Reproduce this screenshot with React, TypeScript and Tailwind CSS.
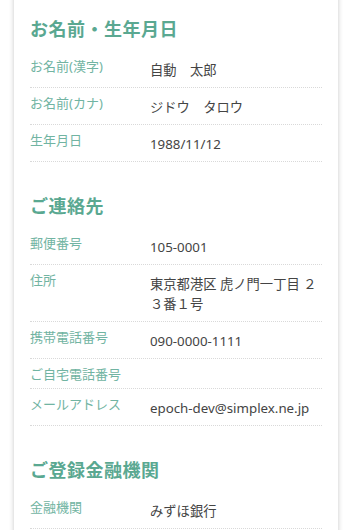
import type { ReactNode } from 'react';

type Row = { label: string; value?: ReactNode };

const sections: { title: string; rows: Row[] }[] = [
  {
    title: 'お名前・生年月日',
    rows: [
      { label: 'お名前(漢字)', value: '自動　太郎' },
      { label: 'お名前(カナ)', value: 'ジドウ　タロウ' },
      { label: '生年月日', value: '1988/11/12' },
    ],
  },
  {
    title: 'ご連絡先',
    rows: [
      { label: '郵便番号', value: '105-0001' },
      { label: '住所', value: '東京都港区 虎ノ門一丁目 ２３番１号' },
      { label: '携帯電話番号', value: '090-0000-1111' },
      { label: 'ご自宅電話番号' },
      { label: 'メールアドレス', value: 'epoch-dev@simplex.ne.jp' },
    ],
  },
  {
    title: 'ご登録金融機関',
    rows: [{ label: '金融機関', value: 'みずほ銀行' }],
  },
];

export default function App() {
  return (
    <div
      className="min-h-[530px] w-full overflow-hidden bg-white px-[14px]"
      style={{ fontFamily: '"Noto Sans", "Noto Sans CJK JP", sans-serif' }}
    >
      <div className="-mt-4 min-h-[560px] bg-white px-4 pt-8 shadow-[0_0_5px_rgba(0,0,0,0.22)]">
        {sections.map((section, index) => (
          <section key={section.title} className={index === 0 ? '' : 'mt-[31px]'}>
            <h2 className="mb-[9px] text-[18px] font-bold leading-[26px] tracking-[0.5px] text-[#5aa891]">{section.title}</h2>
            <div>
              {section.rows.map((row) => (
                <div key={row.label} className="flex items-start border-b border-dotted border-[#d9d9d9]">
                  <div className="w-[120px] shrink-0 pb-[4px] pt-[5px] text-[13px] leading-[20px] text-[#71b4a2]">{row.label}</div>
                  {row.value ? (
                    <div className="min-w-0 flex-1 pb-[7px] pt-[9px] text-[13.3px] leading-[20px] text-[#444]">{row.value}</div>
                  ) : null}
                </div>
              ))}
            </div>
          </section>
        ))}
      </div>
    </div>
  );
}
